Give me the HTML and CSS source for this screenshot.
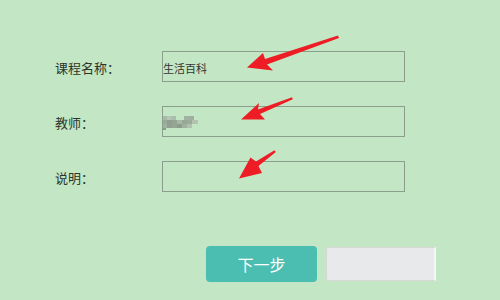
FILE: index.html
```html
<!DOCTYPE html>
<html>
<head>
<meta charset="utf-8">
<link rel="stylesheet" href="styles.css">
</head>
<body>
<div class="page">
  <form class="form">
    <div class="row">
      <label class="label">课程名称：</label>
      <div class="field"><span class="value">生活百科</span></div>
    </div>
    <div class="row">
      <label class="label">教师：</label>
      <div class="field">
        <svg class="blur" width="40" height="14" viewBox="0 0 40 14">
          <rect x="0" y="0" width="4" height="4" fill="#a9b9a9"/>
          <rect x="4" y="0" width="4" height="4" fill="#b5c6b5"/>
          <rect x="8" y="0" width="5" height="4" fill="#adbdad"/>
          <rect x="21" y="0" width="5" height="4" fill="#a3b3a3"/>
          <rect x="26" y="0" width="5" height="4" fill="#9fb0a0"/>
          <rect x="0" y="4" width="4" height="4" fill="#9bab9b"/>
          <rect x="4" y="4" width="5" height="4" fill="#8e9f8f"/>
          <rect x="9" y="4" width="5" height="4" fill="#94a594"/>
          <rect x="14" y="4" width="5" height="4" fill="#a8b8a8"/>
          <rect x="19" y="4" width="5" height="4" fill="#97a897"/>
          <rect x="24" y="4" width="5" height="4" fill="#9aab9a"/>
          <rect x="29" y="4" width="6" height="4" fill="#b2c3b2"/>
          <rect x="0" y="8" width="4" height="4" fill="#a2b2a2"/>
          <rect x="4" y="8" width="5" height="4" fill="#8fa08f"/>
          <rect x="9" y="8" width="5" height="4" fill="#96a696"/>
          <rect x="14" y="8" width="5" height="4" fill="#8c9d8c"/>
          <rect x="19" y="8" width="5" height="4" fill="#9fb09f"/>
          <rect x="24" y="8" width="5" height="4" fill="#b0c1b0"/>
          <rect x="0" y="12" width="3" height="2" fill="#8c9c8c"/>
        </svg>
      </div>
    </div>
    <div class="row">
      <label class="label">说明：</label>
      <div class="field"></div>
    </div>
    <div class="actions">
      <button type="button" class="btn btn-primary">下一步</button>
      <button type="button" class="btn btn-secondary"></button>
    </div>
  </form>
  <svg class="arrows" width="500" height="300" viewBox="0 0 500 300">
    <polygon fill="#ee1c24" points="338,35.5 265,59 263,53 247,67.5 273,70.5 267,64.5 339,38"/>
    <polygon fill="#ee1c24" points="292,97.2 258,109.5 259,103 241,119.5 265,119.5 260,114 292.8,99.3"/>
    <polygon fill="#ee1c24" points="274.5,150.3 256,161.5 250.5,157.5 239,178.5 262,173 258.5,166 275.8,152"/>
  </svg>
</div>
</body>
</html>
```

FILE: styles.css
```css
html, body {
  margin: 0;
  padding: 0;
}
body {
  background: #c3e6c5;
  width: 500px;
  height: 300px;
  overflow: hidden;
  font-family: "Noto Sans CJK SC", "Noto Sans", sans-serif;
}
.page {
  position: relative;
  width: 500px;
  height: 300px;
}
.form {
  margin: 0;
  padding: 51px 0 0 55px;
  display: flex;
  flex-direction: column;
  gap: 24px;
}
.row {
  display: flex;
  align-items: center;
  height: 31px;
}
.label {
  width: 107px;
  font-size: 13px;
  color: #2b352b;
  line-height: 31px;
  padding-top: 2px;
}
.field {
  box-sizing: border-box;
  width: 243px;
  height: 31px;
  border: 1px solid #8b9e8c;
  display: flex;
  align-items: center;
  padding-left: 0;
}
.value {
  font-size: 11px;
  color: #333;
  padding-top: 3px;
}
.blur {
  display: block;
  margin-top: 2px;
}
.actions {
  display: flex;
  gap: 9px;
  padding-left: 151px;
  margin-top: 30px;
  align-items: center;
}
.btn {
  border: none;
  margin: 0;
  padding: 0;
  font-family: "Noto Sans CJK SC", "Noto Sans", sans-serif;
}
.btn-primary {
  width: 111px;
  height: 36px;
  background: #4cbdb1;
  color: #fff;
  font-size: 16px;
  border-radius: 4px;
  letter-spacing: 0;
}
.btn-secondary {
  width: 110px;
  height: 34px;
  background: #e8e9eb;
  border: 1px solid #d6d8d6;
  border-right: 2px solid #f4f5f4;
  border-radius: 2px 0 0 2px;
}
.arrows {
  position: absolute;
  left: 0;
  top: 0;
  pointer-events: none;
}
```
